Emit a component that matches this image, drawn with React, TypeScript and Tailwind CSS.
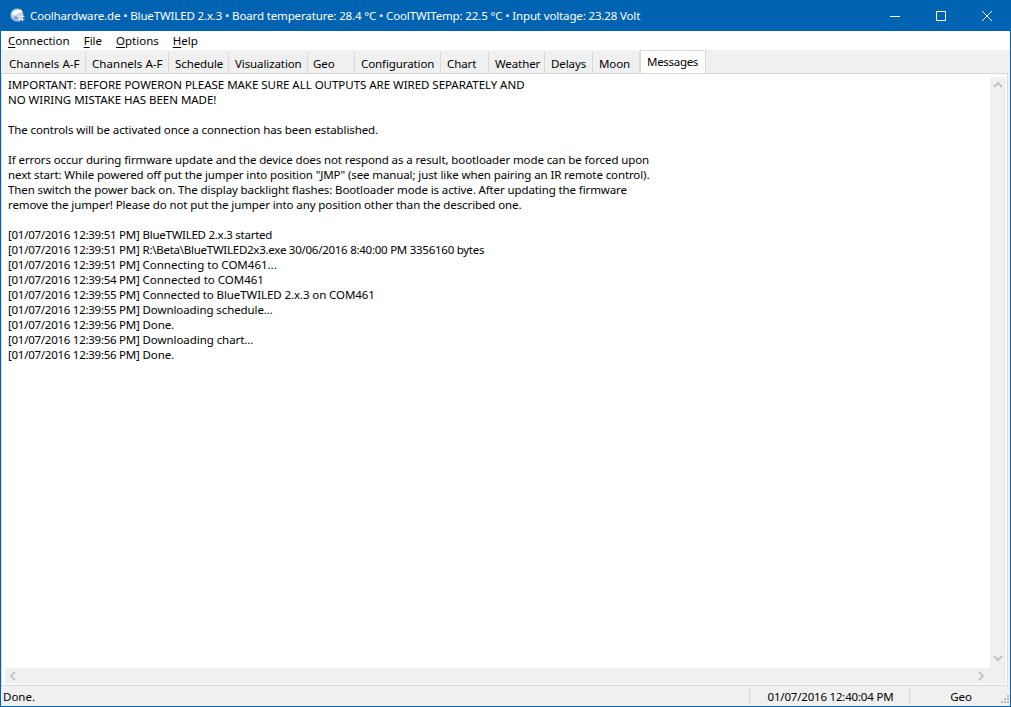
import React from 'react';

const tabs = [
  { label: 'Channels A-F', width: 'w-[83px] tracking-[0.05px]' },
  { label: 'Channels A-F', width: 'w-[83px] tracking-[0.05px]' },
  { label: 'Schedule', width: 'w-[60px]' },
  { label: 'Visualization', width: 'w-[79px]' },
  { label: 'Geo', width: 'w-[47px] !pl-[5px]' },
  { label: 'Configuration', width: 'w-[86px]' },
  { label: 'Chart', width: 'w-[48px]' },
  { label: 'Weather', width: 'w-[56px]' },
  { label: 'Delays', width: 'w-[48px]' },
  { label: 'Moon', width: 'w-[47px]' },
];

const menus = [
  { key: 'C', rest: 'onnection' },
  { key: 'F', rest: 'ile' },
  { key: 'O', rest: 'ptions' },
  { key: 'H', rest: 'elp' },
];

const notice = [
  { text: 'IMPORTANT: BEFORE POWERON PLEASE MAKE SURE ALL OUTPUTS ARE WIRED SEPARATELY AND', track: 'tracking-[-0.03px]' },
  { text: 'NO WIRING MISTAKE HAS BEEN MADE!', track: 'tracking-[-0.03px]' },
  { text: '', track: '' },
  { text: 'The controls will be activated once a connection has been established.', track: 'tracking-[-0.11px]' },
  { text: '', track: '' },
  { text: 'If errors occur during firmware update and the device does not respond as a result, bootloader mode can be forced upon', track: 'tracking-[-0.11px]' },
  { text: 'next start: While powered off put the jumper into position "JMP" (see manual; just like when pairing an IR remote control).', track: 'tracking-[-0.11px]' },
  { text: 'Then switch the power back on. The display backlight flashes: Bootloader mode is active. After updating the firmware', track: 'tracking-[-0.11px]' },
  { text: 'remove the jumper! Please do not put the jumper into any position other than the described one.', track: 'tracking-[-0.11px]' },
  { text: '', track: '' },
];

const log = [
  { time: '[01/07/2016 12:39:51 PM]', text: 'BlueTWILED 2.x.3 started', track: 'tracking-[-0.26px]' },
  { time: '[01/07/2016 12:39:51 PM]', text: 'R:\\Beta\\BlueTWILED2x3.exe 30/06/2016 8:40:00 PM 3356160 bytes', track: 'tracking-[-0.26px]' },
  { time: '[01/07/2016 12:39:51 PM]', text: 'Connecting to COM461...', track: 'tracking-[0px]' },
  { time: '[01/07/2016 12:39:54 PM]', text: 'Connected to COM461', track: 'tracking-[0px]' },
  { time: '[01/07/2016 12:39:55 PM]', text: 'Connected to BlueTWILED 2.x.3 on COM461', track: 'tracking-[-0.09px]' },
  { time: '[01/07/2016 12:39:55 PM]', text: 'Downloading schedule...', track: 'tracking-[-0.09px]' },
  { time: '[01/07/2016 12:39:56 PM]', text: 'Done.', track: 'tracking-[-0.1px]' },
  { time: '[01/07/2016 12:39:56 PM]', text: 'Downloading chart...', track: 'tracking-[-0.06px]' },
  { time: '[01/07/2016 12:39:56 PM]', text: 'Done.', track: 'tracking-[-0.1px]' },
];

const AppIcon = () => (
  <svg height="17" viewBox="0 0 17 17" width="17">
    <circle cx="8" cy="8" fill="#5f86b5" r="7" />
    <circle cx="8" cy="8" fill="#c3d3e6" r="6" />
    <path d="M3 6c1-3 6-4 9-3 2 1 1 3-1 3-3 0-3 2-5 2-2 0-3-1-3-2z" fill="#ffffff" />
    <path d="M4 11c2 2 4 3 6 2l-1-3-3-1z" fill="#8da7c7" />
    <path d="M10.5 7.5v7M13.5 7.5v7M8.5 9.5h7M8.5 12.5h7" fill="none" stroke="#dbe7f3" strokeWidth="1" />
  </svg>
);

const Chevron = ({ d }: { d: string }) => (
  <svg className="shrink-0" height="16" viewBox="0 0 16 16" width="16">
    <path d={d} fill="none" stroke="#c4c4c4" strokeWidth="2" />
  </svg>
);

export default function App() {
  return (
    <div className="flex h-[707px] w-[1011px] flex-col overflow-hidden border-x border-b border-[#0063b1] bg-[#f0f0f0] font-['Noto_Sans',sans-serif] text-[11.5px] leading-[15px] text-black">
      {/* Title bar */}
      <header className="flex h-[31px] shrink-0 items-center bg-[#0063b1] pl-[8px] text-white">
        <AppIcon />
        <span className="ml-[4px] whitespace-nowrap tracking-[-0.14px]">
          Coolhardware.de • BlueTWILED 2.x.3 • Board temperature: 28.4 °C • CoolTWITemp: 22.5 °C • Input voltage: 23.28 Volt
        </span>
        <div className="ml-auto flex h-full">
          <div className="flex w-[46px] items-center justify-center">
            <svg height="10" viewBox="0 0 10 10" width="10">
              <path d="M0 5.5h10" stroke="#ffffff" />
            </svg>
          </div>
          <div className="flex w-[46px] items-center justify-center">
            <svg height="10" viewBox="0 0 10 10" width="10">
              <rect fill="none" height="9" stroke="#ffffff" width="9" x="0.5" y="0.5" />
            </svg>
          </div>
          <div className="flex w-[46px] items-center justify-center">
            <svg height="10" viewBox="0 0 10 10" width="10">
              <path d="M0 0l10 10M10 0L0 10" stroke="#ffffff" />
            </svg>
          </div>
        </div>
      </header>

      {/* Menu */}
      <nav className="flex h-[19px] shrink-0 items-center gap-[14px] bg-white pl-[7px]">
        {menus.map((menu) => (
          <span key={menu.key}>
            <span className="underline underline-offset-2">{menu.key}</span>
            {menu.rest}
          </span>
        ))}
      </nav>

      {/* Tabs */}
      <div className="flex h-[23px] shrink-0 items-end pl-[2px] tracking-[-0.1px]">
        {tabs.map((tab, index) => (
          <div
            className={`flex h-[21px] items-center border-r border-[#d9d9d9] pl-[6px] pt-[1px] ${tab.width}`}
            key={index}
          >
            {tab.label}
          </div>
        ))}
        <div className="flex h-[23px] w-[66px] items-center border-x border-t border-[#d9d9d9] bg-white pb-[2px] pl-[6px] tracking-[-0.3px]">
          Messages
        </div>
      </div>

      {/* Page */}
      <main className="mr-[2px] flex min-h-0 flex-1 flex-col border border-[#d9d9d9] bg-white pb-[1px] pl-[3px] pr-[1px] pt-[3px]">
        <div className="flex min-h-0 flex-1">
          <div className="flex-1 overflow-hidden pl-[3px]">
            {notice.map((line, index) => (
              <div className={`h-[15px] whitespace-nowrap ${line.track}`} key={index}>
                {line.text}
              </div>
            ))}
            {log.map((line, index) => (
              <div className="flex h-[15px] gap-[3px] whitespace-nowrap" key={index}>
                <span className="tracking-[-0.26px]">{line.time}</span>
                <span className={line.track}>{line.text}</span>
              </div>
            ))}
          </div>
          <div className="flex w-[16px] shrink-0 flex-col justify-between bg-[#f0f0f0] pb-[2px]">
            <Chevron d="M4 10l4-4 4 4" />
            <Chevron d="M4 6l4 4 4-4" />
          </div>
        </div>
        <div className="flex h-[16px] shrink-0 justify-between bg-[#f0f0f0] pr-[17px]">
          <Chevron d="M10 4L6 8l4 4" />
          <Chevron d="M6 4l4 4-4 4" />
        </div>
      </main>

      {/* Status bar */}
      <footer className="relative flex h-[20px] shrink-0 items-center">
        <span className="flex-1 pl-[2px]">Done.</span>
        <span className="flex h-[16px] w-[160px] items-center justify-center border-l border-[#d9d9d9] pl-[2px] tracking-[-0.2px]">
          01/07/2016 12:40:04 PM
        </span>
        <span className="flex h-[16px] w-[101px] items-center justify-center border-l border-[#d9d9d9] pl-[2px] tracking-[-0.1px]">
          Geo
        </span>
        <svg className="absolute bottom-[2px] right-0" height="9" viewBox="0 0 9 9" width="9">
          <path d="M6 0h2v2H6zM3 3h2v2H3zM6 3h2v2H6zM0 6h2v2H0zM3 6h2v2H3zM6 6h2v2H6z" fill="#b8b8b8" />
        </svg>
      </footer>
    </div>
  );
}
